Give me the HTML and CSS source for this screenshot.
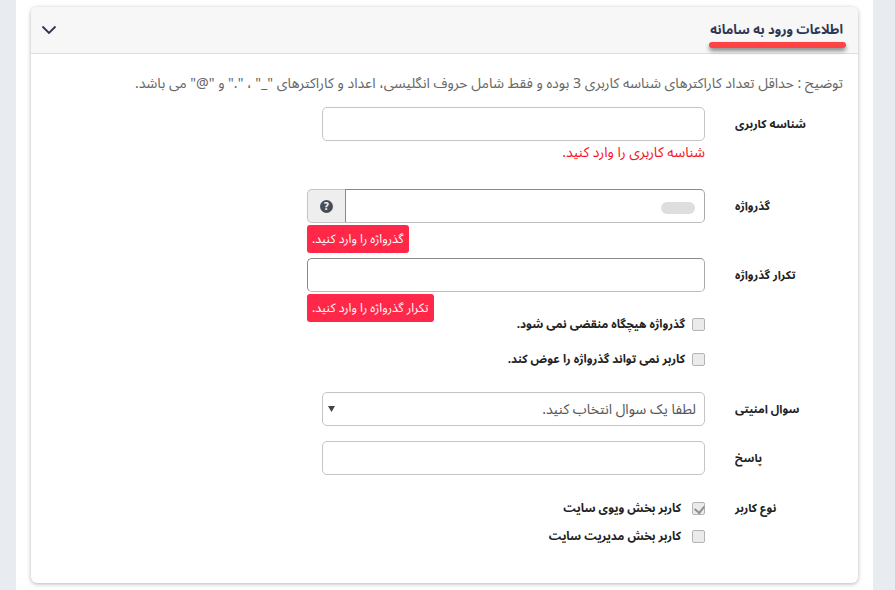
FILE: index.html
```html
<!DOCTYPE html>
<html lang="fa" dir="rtl">
<head>
<meta charset="utf-8">
<title>اطلاعات ورود به سامانه</title>
<link rel="stylesheet" href="styles.css">
</head>
<body>
<main class="page">
  <section class="card">
    <header class="card-head">
      <h2 class="title">اطلاعات ورود به سامانه</h2>
      <svg class="chevron" width="16" height="10" viewBox="0 0 16 10"><path d="M1.500 1.500 8 8l6.500-6.500" fill="none" stroke="#2f3650" stroke-width="1.800"/></svg>
    </header>
    <div class="card-body">
      <p class="hint">توضیح : حداقل تعداد کاراکترهای شناسه کاربری 3 بوده و فقط شامل حروف انگلیسی، اعداد و کاراکترهای "_" ، "." و "@" می باشد.</p>

      <div class="row row-user">
        <label class="label">شناسه کاربری</label>
        <div class="control narrow">
          <input class="input" type="text">
          <div class="error-text">شناسه کاربری را وارد کنید.</div>
        </div>
      </div>

      <div class="row row-pass">
        <label class="label">گذرواژه</label>
        <div class="control">
          <div class="input-group">
            <div class="pass-wrap">
              <input class="input input-dark group-input" type="password">
              <span class="strength"></span>
            </div>
            <span class="addon">
              <svg width="13" height="13" viewBox="0 0 13 13"><circle cx="6.500" cy="6.500" r="6.500" fill="#474d57"/><text x="6.500" y="10" text-anchor="middle" class="help-mark">?</text></svg>
            </span>
          </div>
          <div class="badge">گذرواژه را وارد کنید.</div>
        </div>
      </div>

      <div class="row row-confirm">
        <label class="label">تکرار گذرواژه</label>
        <div class="control">
          <input class="input input-dark" type="password">
          <div class="badge">تکرار گذرواژه را وارد کنید.</div>
        </div>
      </div>

      <div class="row row-checks">
        <span class="label"></span>
        <div class="control checks">
          <label class="check"><input class="box" type="checkbox" disabled><span>گذرواژه هیچگاه منقضی نمی شود.</span></label>
          <label class="check"><input class="box" type="checkbox" disabled><span>کاربر نمی تواند گذرواژه را عوض کند.</span></label>
        </div>
      </div>

      <div class="row row-question">
        <label class="label">سوال امنیتی</label>
        <div class="control narrow select-wrap">
          <select class="input select"><option>لطفا یک سوال انتخاب کنید.</option></select>
          <svg class="arrow" width="7" height="6" viewBox="0 0 7 6"><path d="M0 0h7L3.500 6z" fill="#444"/></svg>
        </div>
      </div>

      <div class="row row-answer">
        <label class="label">پاسخ</label>
        <div class="control narrow"><input class="input" type="text"></div>
      </div>

      <div class="row row-type">
        <label class="label label-type">نوع کاربر</label>
        <div class="control types">
          <label class="check"><input class="box" type="checkbox" checked disabled><span>کاربر بخش ویوی سایت</span></label>
          <label class="check"><input class="box" type="checkbox" disabled><span>کاربر بخش مدیریت سایت</span></label>
        </div>
      </div>
    </div>
  </section>
</main>
</body>
</html>
```
FILE: styles.css
```css
* { box-sizing: border-box; }
html, body { margin: 0; height: 100%; }
body {
  background: #e8ecf1;
  font-family: Tahoma, "Noto Sans Arabic", Vazirmatn, "Noto Naskh Arabic", "DejaVu Sans", sans-serif;
  font-size: 14px;
  color: #212529;
  overflow: hidden;
}
.page {
  width: 857px;
  height: 590px;
  margin-right: 22px;
  padding: 7px 15px 0;
  background: #fff;
}
.card {
  height: 576px;
  border-radius: 6px;
  background: #fff;
  box-shadow: 0 1px 4px rgba(0, 0, 0, .3);
  overflow: hidden;
}
.card-head {
  height: 47px;
  display: flex;
  align-items: center;
  justify-content: space-between;
  padding: 0 15px 0 10px;
  background: #f7f7f7;
  border-bottom: 1px solid #dfdfdf;
}
.title {
  position: relative;
  margin: 0 0 1px;
  font-size: 13px;
  line-height: 20px;
  font-weight: 700;
  color: #2f3650;
}
.title::after {
  content: "";
  position: absolute;
  right: -3px;
  left: -1px;
  top: 22px;
  height: 6px;
  border-radius: 3px;
  background: #ff4344;
  box-shadow: 0 3px 4px rgba(0, 0, 0, .45);
}
.card-body { padding: 0 15px; }
.hint {
  margin: 0;
  padding-top: 22px;
  height: 53px;
  font-size: 14.100px;
  line-height: 16px;
  color: #666;
}
.row { display: flex; align-items: flex-start; }
.label {
  flex: 0 0 138px;
  padding: 8px 0 0 30px;
  text-align: left;
  font-size: 11.500px;
  font-weight: 700;
  line-height: 18px;
  color: #222;
}
.label-type { padding-top: 7px; }
.control { flex: 0 0 398px; }
.narrow { padding-left: 15px; }
.input {
  display: block;
  width: 100%;
  height: 34px;
  padding: 0 8px;
  border: 1px solid #c4c4c4;
  border-radius: 5px;
  background: #fff;
  outline: 0;
  font: inherit;
}
.input-dark {
  border-color: #bdbdbd;
  border-top-color: #8a8a8a;
  border-right-color: #a9a9a9;
  border-left-color: #8a8a8a;
}
.error-text {
  margin-top: 3px;
  font-size: 14px;
  line-height: 17px;
  color: #f80f26;
}
.row-user { height: 82px; }
.row-pass { height: 69px; }
.row-confirm { height: 64px; }
.row-checks { height: 70px; }
.row-question { height: 49px; }
.row-answer { height: 51px; }
.input-group { display: flex; height: 34px; }
.pass-wrap { position: relative; flex: 1; }
.group-input { border-radius: 0 5px 5px 0; }
.strength {
  position: absolute;
  right: 10px;
  top: 13px;
  width: 34px;
  height: 12px;
  border-radius: 6px;
  background: #dedede;
}
.addon {
  flex: 0 0 38px;
  display: flex;
  align-items: center;
  justify-content: center;
  background: #eee;
  border: 1px solid #c4c4c4;
  border-right: 0;
  border-radius: 5px 0 0 5px;
}
.help-mark {
  font-family: "DejaVu Sans", sans-serif;
  font-size: 10px;
  font-weight: 700;
  fill: #eee;
}
.badge {
  display: table;
  margin: 2px auto 0 0;
  padding: 0 5px;
  height: 28px;
  line-height: 28px;
  border-radius: 3px;
  background: #ff2848;
  color: #fff;
  font-size: 12.200px;
}
.check {
  display: flex;
  align-items: center;
  gap: 7px;
  font-size: 11.700px;
  font-weight: 700;
  line-height: 18px;
  color: #222;
}
.check span { padding-top: 2px; }
.box {
  appearance: none;
  -webkit-appearance: none;
  position: relative;
  flex: none;
  width: 13px;
  height: 13px;
  margin: 0;
  background: #ebebeb;
  border: 1px solid #b4b4b4;
  border-radius: 2px;
}
.box:checked::after {
  content: "";
  position: absolute;
  left: 3px;
  top: 1px;
  width: 5px;
  height: 7px;
  border: solid #8f8f8f;
  border-width: 0 2px 2px 0;
  transform: rotate(40deg);
}
.checks { display: flex; flex-direction: column; gap: 15px; margin-top: -8px; }
.select-wrap { position: relative; }
.select {
  appearance: none;
  -webkit-appearance: none;
  font-size: 14px;
  color: #555;
}
.arrow { position: absolute; left: 21px; top: 14px; }
.types { display: flex; flex-direction: column; gap: 8px; padding-top: 6px; }
.types .check { gap: 11px; }
```
